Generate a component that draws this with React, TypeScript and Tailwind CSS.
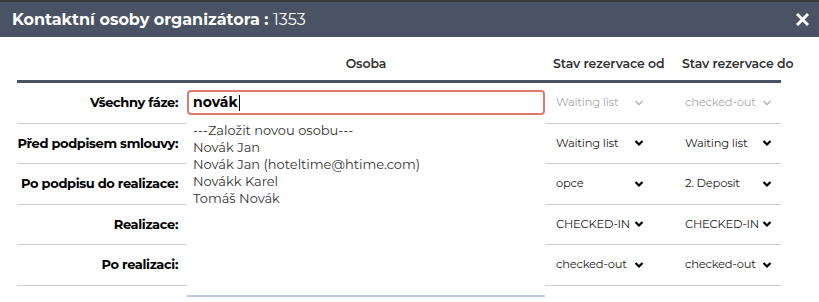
import React from "react";

type Row = {
  label: string;
  od: string;
  do: string;
  disabled?: boolean;
};

const rows: Row[] = [
  { label: "Všechny fáze:", od: "Waiting list", do: "checked-out", disabled: true },
  { label: "Před podpisem smlouvy:", od: "Waiting list", do: "Waiting list" },
  { label: "Po podpisu do realizace:", od: "opce", do: "2. Deposit" },
  { label: "Realizace:", od: "CHECKED-IN", do: "CHECKED-IN" },
  { label: "Po realizaci:", od: "checked-out", do: "checked-out" },
];

const options = [
  "---Založit novou osobu---",
  "Novák Jan",
  "Novák Jan (hoteltime@htime.com)",
  "Novákk Karel",
  "Tomáš Novák",
];

const Chevron = ({ light }: { light?: boolean }) => (
  <svg
    width="10"
    height="8"
    viewBox="0 0 10 8"
    className={light ? "shrink-0 text-[#bbb]" : "shrink-0 text-black"}
  >
    <path
      d="M1.5 2 L5 5.5 L8.5 2"
      fill="none"
      stroke="currentColor"
      strokeWidth={light ? 1.6 : 2.2}
    />
  </svg>
);

const Select = ({
  value,
  disabled,
  width,
}: {
  value: string;
  disabled?: boolean;
  width: string;
}) => (
  <div className={`flex items-center justify-between pl-[3px] ${width}`}>
    <span
      className={
        disabled
          ? "whitespace-nowrap text-[11.5px] tracking-[-0.2px] text-[#aaa]"
          : "whitespace-nowrap text-[11.5px] tracking-[-0.2px] text-[#222]"
      }
    >
      {value}
    </span>
    <Chevron light={disabled} />
  </div>
);

const App = (): JSX.Element => {
  return (
    <div
      className="h-[302px] w-[819px] overflow-hidden bg-white"
      style={{ fontFamily: "Montserrat, 'Open Sans', 'Liberation Sans', sans-serif" }}
    >
      <div className="h-[2px] bg-[#3a3a3a]" />
      <div className="flex h-[35px] items-center justify-between bg-[#4a5363] pl-[12px] pr-[10px]">
        <h1 className="text-[16px] text-white">
          <span className="font-bold">Kontaktní osoby organizátora : </span>
          <span className="font-normal">1353</span>
        </h1>
        <svg width="13" height="13" viewBox="0 0 13 13">
          <path
            d="M2 2 L11 11 M11 2 L2 11"
            stroke="white"
            strokeWidth="3"
            strokeLinecap="square"
          />
        </svg>
      </div>

      <div className="relative ml-[17px] w-[764px]">
        <div className="grid h-[46px] grid-cols-[170px_358px_129px_107px] items-end border-b-[3px] border-[#4a5363] pb-[6px] text-[12.5px] font-semibold tracking-[-0.1px] text-[#333]">
          <div />
          <div className="text-center">Osoba</div>
          <div className="whitespace-nowrap pl-[8px]">Stav rezervace od</div>
          <div className="whitespace-nowrap pl-[8px]">Stav rezervace do</div>
        </div>

        {rows.map((r, i) => (
          <div
            key={r.label}
            className="grid h-[40.5px] grid-cols-[170px_358px_129px_107px] items-center border-b border-[#cfcfcf]"
          >
            <div className="whitespace-nowrap pr-[9px] text-right text-[13px] font-bold tracking-[-0.35px] text-black">
              {r.label}
            </div>
            <div>
              {i === 0 ? (
                <div className="flex h-[25px] items-center rounded-[4px] border-2 border-[#e07a70] px-[4px] text-[14px] font-bold text-black">
                  novák
                  <span className="ml-[1px] inline-block h-[16px] w-px bg-black" />
                </div>
              ) : null}
            </div>
            <div className="pl-[8px]">
              <Select value={r.od} disabled={r.disabled} width="w-[91px]" />
            </div>
            <div className="pl-[8px]">
              <Select value={r.do} disabled={r.disabled} width="w-[90px]" />
            </div>
          </div>
        ))}

        <ul className="absolute left-[170px] top-[84px] h-[176px] w-[358px] border-b-2 border-[#b9c7e6] bg-white pl-[6px] pt-[1px] text-[13px] leading-[17px] text-[#333]">
          {options.map((o) => (
            <li key={o}>{o}</li>
          ))}
        </ul>
      </div>
    </div>
  );
};

export default App;
